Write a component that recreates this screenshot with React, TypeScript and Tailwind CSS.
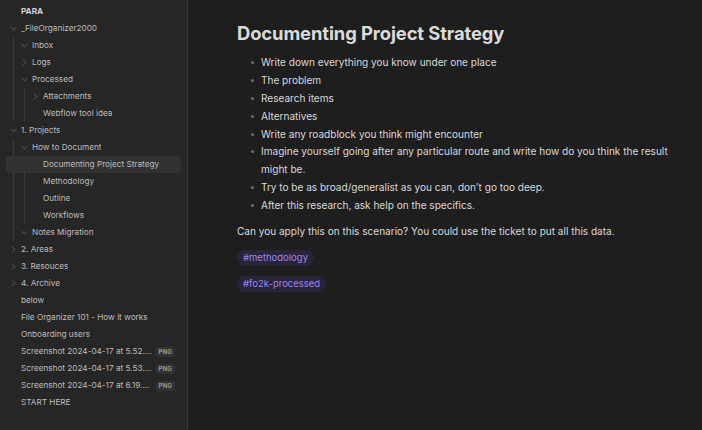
import React from "react";

type Node = {
  label: string;
  open?: boolean;
  children?: Node[];
  badge?: string;
  selected?: boolean;
};

const tree: Node[] = [
  {
    label: "_FileOrganizer2000",
    open: true,
    children: [
      { label: "Inbox", open: true, children: [] },
      { label: "Logs", open: false, children: [] },
      {
        label: "Processed",
        open: true,
        children: [
          { label: "Attachments", open: false, children: [] },
          { label: "Webflow tool idea" },
        ],
      },
    ],
  },
  {
    label: "1. Projects",
    open: true,
    children: [
      {
        label: "How to Document",
        open: true,
        children: [
          { label: "Documenting Project Strategy", selected: true },
          { label: "Methodology" },
          { label: "Outline" },
          { label: "Workflows" },
        ],
      },
      { label: "Notes Migration", open: true, children: [] },
    ],
  },
  { label: "2. Areas", open: false, children: [] },
  { label: "3. Resouces", open: false, children: [] },
  { label: "4. Archive", open: false, children: [] },
  { label: "below" },
  { label: "File Organizer 101 - How it works" },
  { label: "Onboarding users" },
  { label: "Screenshot 2024-04-17 at 5.52....", badge: "PNG" },
  { label: "Screenshot 2024-04-17 at 5.53....", badge: "PNG" },
  { label: "Screenshot 2024-04-17 at 6.19....", badge: "PNG" },
  { label: "START HERE" },
];

function Chevron({ open }: { open: boolean }) {
  return (
    <svg width="7" height="7" viewBox="0 0 10 10" fill="none" stroke="#5f5f5f" strokeWidth="1.4" strokeLinecap="round" strokeLinejoin="round">
      {open ? <path d="M1.5 3.5 L5 7 L8.5 3.5" /> : <path d="M3.5 1.5 L7 5 L3.5 8.5" />}
    </svg>
  );
}

function Row({ node, depth }: { node: Node; depth: number }) {
  const isFolder = node.children !== undefined;
  const pad = depth === 0 ? "pl-[10px]" : "pl-[7px]";
  const sel = node.selected ? "bg-[#323232] rounded-[4px] -ml-[19px] pl-[26px]" : pad;
  return (
    <div className={`flex items-center h-[17px] ${sel}`}>
      <span className="w-[11px] flex items-center shrink-0">
        {isFolder && <Chevron open={!!node.open} />}
      </span>
      <span className="truncate text-[#bcbcbc]">{node.label}</span>
      {node.badge && (
        <span className="ml-auto mr-[6px] bg-[#333333] text-[#9a9a9a] text-[6px] font-bold rounded-[3px] px-[3px] h-[10px] leading-[10px] tracking-wide">
          {node.badge}
        </span>
      )}
    </div>
  );
}

function Branch({ node, depth }: { node: Node; depth: number }) {
  const kids = node.children ?? [];
  return (
    <div>
      <Row node={node} depth={depth} />
      {node.open && kids.length > 0 && (
        <div className={`${depth === 0 ? "ml-[13px]" : "ml-[10px]"} border-l border-[#3a3a3a]`}>
          {kids.map((k) => (
            <Branch key={k.label} node={k} depth={depth + 1} />
          ))}
        </div>
      )}
    </div>
  );
}

const bullets = [
  "Write down everything you know under one place",
  "The problem",
  "Research items",
  "Alternatives",
  "Write any roadblock you think might encounter",
  "Imagine yourself going after any particular route and write how do you think the result might be.",
  "Try to be as broad/generalist as you can, don’t go too deep.",
  "After this research, ask help on the specifics.",
];

export default function App() {
  return (
    <div className="flex w-[702px] h-[430px] overflow-hidden bg-[#1e1e1e] font-['Inter',sans-serif]">
      {/* Sidebar */}
      <aside className="w-[188px] shrink-0 bg-[#262626] border-r border-[#363636] pt-[3px] pr-[6px] text-[8.2px]">
        <div className="h-[17px] flex items-center pl-[21px] font-bold text-[#d4d4d4]">PARA</div>
        {tree.map((n) => (
          <Branch key={n.label} node={n} depth={0} />
        ))}
      </aside>

      {/* Note */}
      <main className="flex-1 pl-[49px] pr-[24px] pt-[20px] text-[#d9d9d9]">
        <h1 className="text-[18.4px] font-bold leading-[27px] text-[#dadada] tracking-[-0.1px]">
          Documenting Project Strategy
        </h1>
        <ul className="mt-[7px] pl-[24px] text-[10.05px] leading-[17.5px]">
          {bullets.map((b) => (
            <li key={b} className="relative mb-[0.4px]">
              <span className="absolute -left-[10px] top-[7px] w-[3px] h-[3px] rounded-full bg-[#6d6d6d]" />
              {b}
            </li>
          ))}
        </ul>
        <p className="mt-[9px] text-[10.05px] leading-[17px]">
          Can you apply this on this scenario? You could use the ticket to put all this data.
        </p>
        <div className="mt-[10px] flex flex-col items-start gap-[10px] text-[9.5px]">
          <span className="bg-[#29243a] text-[#9c86f0] rounded-full px-[6px] h-[16px] leading-[16px]">#methodology</span>
          <span className="bg-[#29243a] text-[#9c86f0] rounded-full px-[6px] h-[16px] leading-[16px]">#fo2k-processed</span>
        </div>
      </main>
    </div>
  );
}
